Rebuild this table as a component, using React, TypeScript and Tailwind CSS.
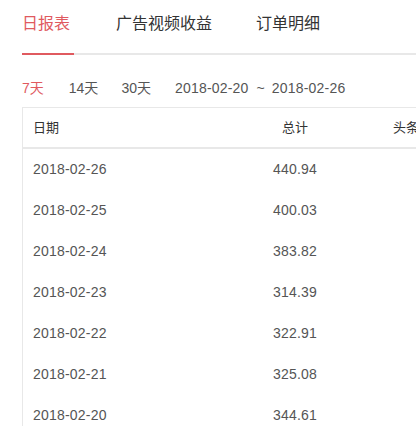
import React from 'react';

const rows = [
  { date: '2018-02-26', total: '440.94' },
  { date: '2018-02-25', total: '400.03' },
  { date: '2018-02-24', total: '383.82' },
  { date: '2018-02-23', total: '314.39' },
  { date: '2018-02-22', total: '322.91' },
  { date: '2018-02-21', total: '325.08' },
  { date: '2018-02-20', total: '344.61' },
];

const font = { fontFamily: '"Liberation Sans", "Noto Sans CJK SC", sans-serif' };

export default function App() {
  return (
    <div className="w-[416px] h-[426px] overflow-hidden bg-white" style={font}>
      {/* Tabs */}
      <div className="ml-[22px] flex border-b-2 border-[#e8e8e8] pt-[12px] text-[16px] leading-[24px] text-[#333]">
        <div className="relative mr-[46px] pb-[17px] text-[#e05a5f]">
          日报表
          <span className="absolute left-0 bottom-[-2px] h-[2px] w-[52px] bg-[#e05a5f]" />
        </div>
        <div className="mr-[44px] pb-[17px]">广告视频收益</div>
        <div className="pb-[17px]">订单明细</div>
      </div>

      {/* Range filter */}
      <div className="ml-[22px] mt-[23px] flex items-center text-[14px] leading-[20px] text-[#555]">
        <span className="mr-[25px] text-[#e05a5f]">7天</span>
        <span className="mr-[23px]">14天</span>
        <span className="mr-[24px]">30天</span>
        <span className="tracking-[0.2px]">2018-02-20</span>
        <span className="ml-[8px] mr-[7px]">~</span>
        <span className="tracking-[0.2px]">2018-02-26</span>
      </div>

      {/* Table */}
      <div className="ml-[22px] mt-[9px] w-[520px] border-l border-t border-[#e8e8e8]">
        <div className="flex h-[41px] items-center border-b-2 border-[#e8e8e8] text-[13px] text-[#333]">
          <div className="w-[207px] pl-[10px]">日期</div>
          <div className="w-[130px] text-center">总计</div>
          <div className="w-[118px] text-center">头条收益</div>
        </div>
        {rows.map((r) => (
          <div key={r.date} className="flex h-[41px] items-center text-[14px] tracking-[0.2px] text-[#555]">
            <div className="w-[207px] pl-[10px]">{r.date}</div>
            <div className="w-[130px] text-center">{r.total}</div>
            <div className="w-[118px]" />
          </div>
        ))}
      </div>
    </div>
  );
}
